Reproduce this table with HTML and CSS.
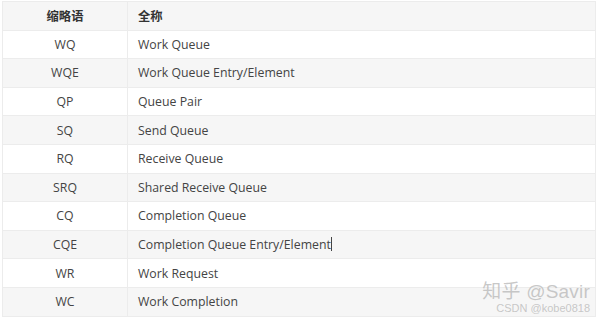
FILE: index.html
```html
<!DOCTYPE html>
<html lang="zh">
<head>
<meta charset="utf-8">
<link rel="stylesheet" href="styles.css">
</head>
<body>
<div class="page">
<table class="abbr">
  <thead>
    <tr><th class="c1">缩略语</th><th class="c2">全称</th></tr>
  </thead>
  <tbody>
    <tr><td class="c1">WQ</td><td class="c2">Work Queue</td></tr>
    <tr><td class="c1">WQE</td><td class="c2">Work Queue Entry/Element</td></tr>
    <tr><td class="c1">QP</td><td class="c2">Queue Pair</td></tr>
    <tr><td class="c1">SQ</td><td class="c2">Send Queue</td></tr>
    <tr><td class="c1">RQ</td><td class="c2">Receive Queue</td></tr>
    <tr><td class="c1">SRQ</td><td class="c2">Shared Receive Queue</td></tr>
    <tr><td class="c1">CQ</td><td class="c2">Completion Queue</td></tr>
    <tr><td class="c1">CQE</td><td class="c2">Completion Queue Entry/Element<span class="caret"></span></td></tr>
    <tr><td class="c1">WR</td><td class="c2">Work Request</td></tr>
    <tr><td class="c1">WC</td><td class="c2">Work Completion</td></tr>
  </tbody>
</table>
<div class="mark">
  <div class="mark-main">知乎 @Savir</div>
  <div class="mark-sub">CSDN @kobe0818</div>
</div>
</div>
</body>
</html>
```

FILE: styles.css
```css
html, body {
  margin: 0;
  padding: 0;
  background: #ffffff;
}
.page {
  position: relative;
  width: 600px;
  height: 317px;
  overflow: hidden;
  padding: 1px 4px 0 2px;
  box-sizing: border-box;
}
.abbr {
  width: 594px;
  border-collapse: collapse;
  font-family: "Open Sans", "Noto Sans CJK SC", sans-serif;
  font-size: 12.3px;
  color: #444444;
  border: 1px solid #ececec;
}
.abbr tr { height: 28.6px; }
.abbr th, .abbr td {
  padding: 0 10px;
  border: 1px solid #ececec;
  font-weight: normal;
}
.abbr th {
  font-weight: bold;
  color: #333333;
}
.abbr thead tr { background: #f6f6f6; }
.abbr tbody tr:nth-child(even) { background: #f6f6f6; }
.abbr .c1 {
  width: 104px;
  text-align: center;
}
.abbr .c2 { text-align: left; }
.caret {
  display: inline-block;
  width: 1px;
  height: 14px;
  background: #444;
  vertical-align: -2px;
}
.mark {
  position: absolute;
  right: 10px;
  bottom: 3px;
  text-align: right;
  font-family: "Liberation Sans", "Noto Sans CJK SC", sans-serif;
  color: rgba(190,190,190,0.85);
}
.mark-main {
  font-size: 19px;
  line-height: 21px;
  letter-spacing: 0.2px;
}
.mark-sub {
  font-size: 11px;
  line-height: 12px;
}
```
